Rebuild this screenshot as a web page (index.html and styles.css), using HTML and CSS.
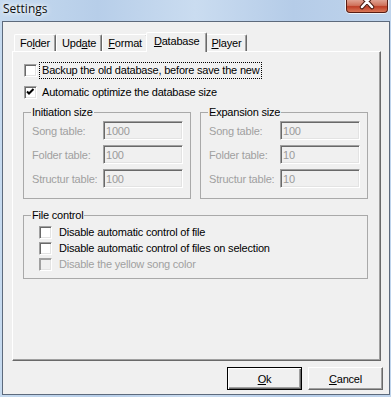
FILE: index.html
```html
<!DOCTYPE html>
<html lang="en">
<head>
  <meta charset="UTF-8">
  <title>Settings</title>
  <link rel="stylesheet" href="styles.css">
</head>
<body>
  <div class="window">
    <div class="titlebar">
      <span class="title">Settings</span>
      <span class="close">
        <svg width="40" height="11" viewBox="0 0 40 11">
          <path d="M15 -4 L25 7 M25 -4 L15 7" stroke="#4a1a10" stroke-width="4.5" stroke-linecap="round"/>
          <path d="M15 -4 L25 7 M25 -4 L15 7" stroke="#fff" stroke-width="2.5" stroke-linecap="round"/>
        </svg>
      </span>
    </div>

    <div class="client">
      <div class="tabs">
        <div class="tab">Fo<u>l</u>der</div>
        <div class="tab">Upd<u>a</u>te</div>
        <div class="tab"><u>F</u>ormat</div>
        <div class="tab active"><u>D</u>atabase</div>
        <div class="tab"><u>P</u>layer</div>
      </div>

      <div class="panel">
        <label class="check">
          <span class="box"></span>
          <span class="text focus">Backup the old database, before save the new</span>
        </label>
        <label class="check">
          <span class="box">
            <svg width="11" height="11" viewBox="0 0 11 11">
              <path d="M2 4.5 L4 6.5 L8.5 2" stroke="#000" stroke-width="2" fill="none"/>
            </svg>
          </span>
          <span class="text">Automatic optimize the database size</span>
        </label>

        <div class="groups">
          <fieldset class="group">
            <legend>Initiation size</legend>
            <div class="field"><span>Song table:</span><input type="text" value="1000" disabled></div>
            <div class="field"><span>Folder table:</span><input type="text" value="100" disabled></div>
            <div class="field"><span>Structur table:</span><input type="text" value="100" disabled></div>
          </fieldset>
          <fieldset class="group">
            <legend>Expansion size</legend>
            <div class="field"><span>Song table:</span><input type="text" value="100" disabled></div>
            <div class="field"><span>Folder table:</span><input type="text" value="10" disabled></div>
            <div class="field"><span>Structur table:</span><input type="text" value="10" disabled></div>
          </fieldset>
        </div>

        <fieldset class="group files">
          <legend>File control</legend>
          <label class="check small">
            <span class="box"></span>
            <span class="text">Disable automatic control of file</span>
          </label>
          <label class="check small">
            <span class="box"></span>
            <span class="text">Disable automatic control of files on selection</span>
          </label>
          <label class="check small disabled">
            <span class="box"></span>
            <span class="text">Disable the yellow song color</span>
          </label>
        </fieldset>
      </div>

      <div class="buttons">
        <button class="btn default"><u>O</u>k</button>
        <button class="btn"><u>C</u>ancel</button>
      </div>
    </div>
  </div>
</body>
</html>
```

FILE: styles.css
```css
body {
  margin: 0;
  font-family: "Liberation Sans", Arial, sans-serif;
  font-size: 11px;
  letter-spacing: -0.2px;
  color: #000;
}

.window {
  width: 391px;
  height: 397px;
  box-sizing: border-box;
  background: linear-gradient(90deg, #c6daef 0%, #b7cee9 25%, #cadcf0 50%, #b5cce8 75%, #bfd4ec 100%);
  overflow: hidden;
}

/* title bar */
.titlebar {
  height: 21px;
  display: flex;
  justify-content: space-between;
  align-items: flex-start;
}

.title {
  font-family: "Open Sans", "Noto Sans", sans-serif;
  font-size: 12px;
  letter-spacing: 0;
  line-height: 18px;
  padding-left: 3px;
  color: #101010;
  text-shadow: 0 0 6px #fff, 0 0 4px #fff;
}

.close {
  width: 40px;
  height: 12px;
  margin-right: 3px;
  border: 1px solid #5a1e14;
  border-top: none;
  border-radius: 0 0 4px 4px;
  background: linear-gradient(#e0a292 0%, #d0735c 45%, #bf3f27 55%, #d9785a 100%);
  box-shadow: 0 0 0 1px rgba(255, 255, 255, 0.7);
  display: flex;
  overflow: hidden;
}

/* client area */
.client {
  width: 388px;
  height: 374px;
  margin-left: 2px;
  box-sizing: border-box;
  border: 1px solid #5d6a7c;
  background: #f0f0f0;
  padding: 10px 8px 0 9px;
}

/* tabs */
.tabs {
  display: flex;
  align-items: flex-end;
  height: 19px;
  padding-left: 2px;
}

.tab {
  height: 17px;
  box-sizing: border-box;
  padding: 0 5px;
  line-height: 16px;
  border: 1px solid #fff;
  border-right-color: #696969;
  border-bottom: none;
  border-radius: 2px 2px 0 0;
  box-shadow: inset -1px 0 #a0a0a0;
  background: #f0f0f0;
}

.tab.active {
  position: relative;
  z-index: 1;
  height: 20px;
  margin: 0 -2px -1px;
  padding: 0 7px;
  line-height: 17px;
}

/* tab page */
.panel {
  width: 369px;
  height: 310px;
  box-sizing: border-box;
  border: 1px solid #fff;
  border-right-color: #696969;
  border-bottom-color: #696969;
  box-shadow: inset -1px -1px #a0a0a0;
  padding: 10px 0 0 10px;
}

/* checkboxes */
.check {
  display: flex;
  align-items: center;
  height: 17px;
  margin-bottom: 5px;
}

.box {
  width: 13px;
  height: 13px;
  box-sizing: border-box;
  border: 1px solid;
  border-color: #a0a0a0 #fff #fff #a0a0a0;
  box-shadow: inset 1px 1px #696969, inset -1px -1px #e3e3e3;
  background: #fff;
  display: flex;
  margin: 0 4px 0 1px;
}

.text {
  padding: 0 1px;
  line-height: 13px;
}

.text.focus {
  outline: 1px dotted #000;
  outline-offset: 1px;
}

.check.small {
  height: 16px;
  margin: 0 0 0 6px;
}

.check.small .box {
  margin-right: 6px;
}

.check.disabled {
  color: #a0a0a0;
}

.check.disabled .box {
  background: #f0f0f0;
  box-shadow: inset 1px 1px #a0a0a0, inset -1px -1px #e3e3e3;
}

/* group boxes */
.groups {
  display: flex;
  gap: 9px;
  margin-top: 2px;
}

.group {
  width: 168px;
  box-sizing: border-box;
  margin: 0;
  min-width: 0;
  border: 1px solid #a9a9a9;
  padding: 2px 7px 10px 8px;
}

.group legend {
  padding: 0 1px;
  margin-left: -1px;
  line-height: 13px;
}

.field {
  display: flex;
  align-items: center;
  height: 19px;
  margin-bottom: 5px;
  color: #a0a0a0;
}

.field:last-child {
  margin-bottom: 0;
}

.field span {
  width: 71px;
}

.field input {
  width: 80px;
  height: 19px;
  box-sizing: border-box;
  margin: 0;
  padding: 0 2px;
  font: inherit;
  letter-spacing: inherit;
  color: #9a9a9a;
  background: #f0f0f0;
  border: 1px solid;
  border-color: #a0a0a0 #fff #fff #a0a0a0;
  box-shadow: inset 1px 1px #696969, inset -1px -1px #e3e3e3;
}

.group.files {
  width: 345px;
  margin-top: 10px;
  padding: 2px 8px 6px 8px;
}

/* dialog buttons */
.buttons {
  display: flex;
  justify-content: flex-end;
  gap: 6px;
  margin: 6px -2px 0 0;
}

.btn {
  width: 75px;
  height: 23px;
  box-sizing: border-box;
  font: inherit;
  letter-spacing: inherit;
  color: #000;
  background: #f0f0f0;
  border: 1px solid;
  border-color: #fff #696969 #696969 #fff;
  box-shadow: inset -1px -1px #a0a0a0;
  padding: 0;
}

.btn.default {
  border: 1px solid #000;
  box-shadow: inset 1px 1px #fff, inset -1px -1px #696969, inset -2px -2px #a0a0a0;
}
```
